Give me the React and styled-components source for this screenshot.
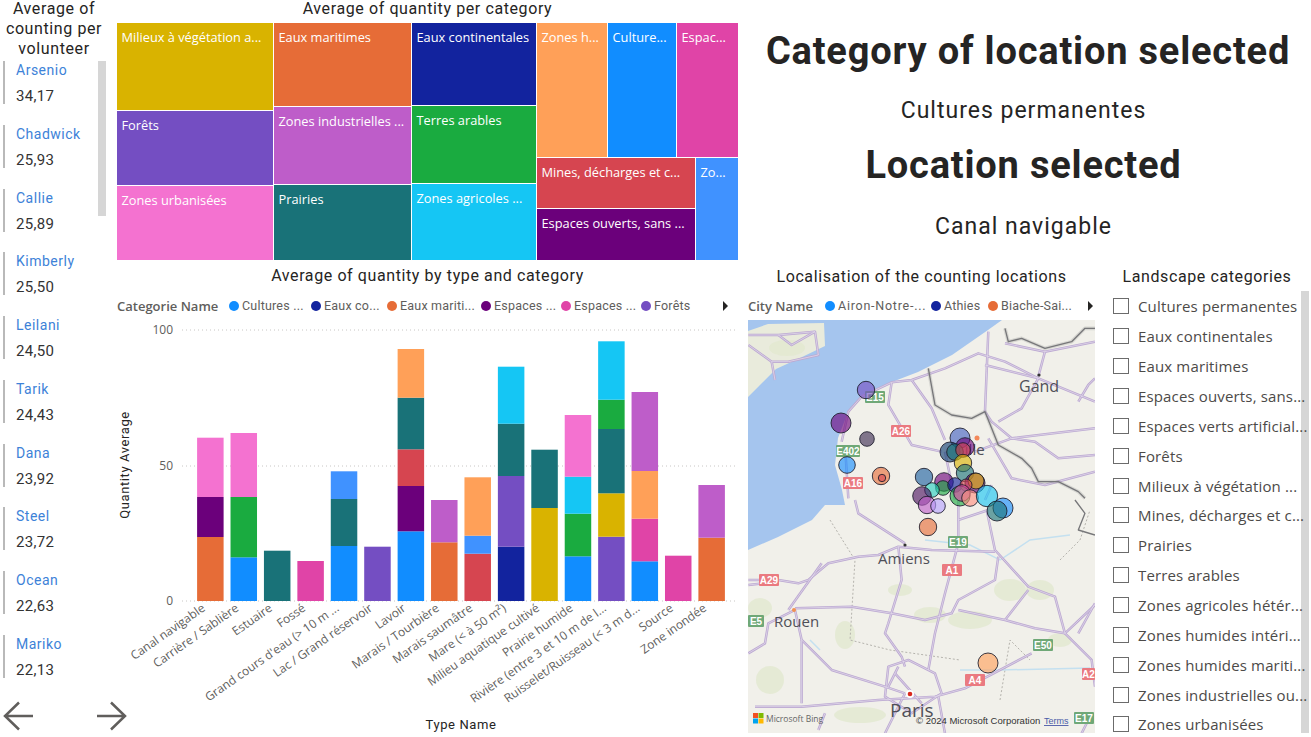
import React from "react";
import styled, { createGlobalStyle } from "styled-components";

const C = { blue: "#118DFF", navy: "#12239E", orange: "#E66C37", plum: "#6B007B", magenta: "#E044A7", violet: "#744EC2", yellow: "#D9B300", red: "#D64550", teal: "#197278", green: "#1AAB40", cyan: "#15C6F4", sky: "#4092FF", peach: "#FFA058", orchid: "#BE5DC9", pink: "#F472D0" };
const DIN = `"Roboto", "Liberation Sans", sans-serif`;
const UI = `"Open Sans", "Liberation Sans", sans-serif`;

const Global = createGlobalStyle`
  html, body { margin: 0; padding: 0; background: #fff; overflow: hidden; }
  * { box-sizing: border-box; }
`;
const Page = styled.div`display:flex;width:1311px;height:737px;overflow:hidden;background:#fff;`;
const LeftCol = styled.aside`width:107px;flex:none;display:flex;flex-direction:column;`;
const VisualTitle = styled.h2`margin:0;font:400 ${p => p.$size || 16}px/${p => p.$lh || 20}px ${DIN};letter-spacing:${p => p.$ls || .6}px;color:#252423;text-align:center;`;
const LeftTitle = styled(VisualTitle)`height:62px;margin-top:-1px;padding-left:1px;`;
const ListWrap = styled.div`display:flex;align-items:flex-start;height:631px;overflow:hidden;`;
const List = styled.ul`list-style:none;margin:0;padding:0 0 0 3px;width:98px;flex:none;display:flex;flex-direction:column;gap:20.75px;`;
const Card = styled.li`height:43px;border-left:2px solid #b9b9b9;padding:1px 0 0 11px;`;
const CardName = styled.div`font:400 14px/16px ${DIN};letter-spacing:.5px;color:#3d82d8;`;
const CardValue = styled.div`font:400 15px/18px ${DIN};letter-spacing:.3px;color:#333;margin-top:9px;`;
const Scroll = styled.div`flex:none;background:#d6d6d6;width:${p => p.$w}px;height:${p => p.$h}px;`;
const Arrows = styled.div`display:flex;justify-content:space-between;padding:0 0 0 3px;width:127px;margin-top:9px;`;

const Center = styled.main`width:633px;flex:none;display:flex;flex-direction:column;padding-left:10px;`;
const TopTitle = styled(VisualTitle)`height:23px;line-height:18px;padding-right:2px;`;
const Tree = styled.div`display:flex;gap:1px;width:621px;height:237px;`;
const TreeCol = styled.div`display:flex;flex-direction:${p => p.$dir || "column"};gap:1px;width:${p => p.$w ? p.$w + "px" : "auto"};height:${p => p.$h ? p.$h + "px" : "auto"};flex:none;`;
const Tile = styled.div`flex:none;width:${p => p.$w ? p.$w + "px" : "100%"};height:${p => p.$h ? p.$h + "px" : "100%"};background:${p => p.$bg};color:#fff;font:400 12.8px/18px ${UI};padding:5px 0 0 4.5px;white-space:nowrap;overflow:hidden;`;
const ChartTitle = styled(VisualTitle)`height:32px;line-height:32px;padding-right:2px;`;
const Legend = styled.div`display:flex;align-items:center;height:28px;width:${p => p.$w}px;position:relative;`;
const LegendName = styled.span`font:600 13px/28px ${UI};color:#605e5c;margin-right:${p => p.$gap}px;white-space:nowrap;width:${p => p.$w}px;flex:none;`;
const LegendItem = styled.span`display:flex;align-items:center;gap:3px;font:400 12.5px/28px ${DIN};letter-spacing:${p => p.$ls || .2}px;color:#605e5c;width:${p => p.$w}px;flex:none;white-space:nowrap;`;
const Dot = styled.i`display:block;width:10px;height:10px;border-radius:50%;background:${p => p.$c};flex:none;`;
const LegendNext = styled.i`position:absolute;right:${p => p.$r}px;top:9px;width:0;height:0;border-left:5px solid #252423;border-top:5px solid transparent;border-bottom:5px solid transparent;`;
const Drawing = styled.svg`display:block;flex:none;margin-left:${p => p.$ml || 0}px;`;

const Right = styled.section`flex:1;display:flex;flex-direction:column;min-width:0;`;
const Heading = styled.div`height:265px;display:flex;flex-direction:column;align-items:center;padding:27px 4px 0 0;color:#252423;`;
const BigLine = styled.h1`margin:${p => p.$mt}px 0 0 ${p => p.$ml || 0}px;font:700 38px/48px ${DIN};letter-spacing:.8px;white-space:nowrap;`;
const SubLine = styled.div`margin-top:${p => p.$mt}px;font:400 23px/28px ${DIN};letter-spacing:1px;white-space:nowrap;`;
const Lower = styled.div`display:flex;flex:1;min-height:0;`;
const MapCol = styled.div`width:360px;flex:none;padding-left:8px;`;
const MapTitle = styled(VisualTitle)`height:27px;line-height:24px;width:347px;`;
const FilterCol = styled.div`flex:1;position:relative;padding-left:13px;`;
const FilterTitle = styled(VisualTitle)`height:26px;line-height:24px;width:190px;margin-left:-1px;`;
const FilterBody = styled.div`display:flex;flex-direction:column;position:relative;padding-top:.5px;`;
const FilterRow = styled.label`display:flex;align-items:center;gap:9px;height:29.87px;font:400 15px/20px ${UI};letter-spacing:.15px;color:#4c4a48;white-space:nowrap;position:relative;z-index:1;`;
const Check = styled.span`width:16px;height:16px;border:1px solid #6b6b6b;background:#fff;flex:none;`;
const FilterScrollBox = styled.div`position:absolute;left:188px;top:0;`;

const volunteers = [["Arsenio", "34,17"], ["Chadwick", "25,93"], ["Callie", "25,89"], ["Kimberly", "25,50"], ["Leilani", "24,50"], ["Tarik", "24,43"], ["Dana", "23,92"], ["Steel", "23,72"], ["Ocean", "22,63"], ["Mariko", "22,13"]];
const filters = ["Cultures permanentes", "Eaux continentales", "Eaux maritimes", "Espaces ouverts, sans...", "Espaces verts artificial...", "Forêts", "Milieux à végétation ...", "Mines, décharges et c...", "Prairies", "Terres arables", "Zones agricoles hétér...", "Zones humides intéri...", "Zones humides mariti...", "Zones industrielles ou...", "Zones urbanisées"];

const bars = [
  ["Canal navigable", [[C.orange, 537], [C.plum, 497], [C.pink, 437.7]]],
  ["Carrière / Sablière", [[C.blue, 557.3], [C.green, 497], [C.pink, 433]]],
  ["Estuaire", [[C.teal, 550.7]]],
  ["Fossé", [[C.magenta, 561]]],
  ["Grand cours d'eau (> 10 m ...", [[C.blue, 546], [C.teal, 499], [C.sky, 471.3]]],
  ["Lac / Grand réservoir", [[C.violet, 546.7]]],
  ["Lavoir", [[C.blue, 531.3], [C.plum, 486], [C.red, 449.3], [C.teal, 397.7], [C.peach, 349]]],
  ["Marais / Tourbière", [[C.orange, 542.3], [C.orchid, 500]]],
  ["Marais saumâtre", [[C.red, 553.7], [C.sky, 535.7], [C.peach, 477.3]]],
  ["Mare (< à 50 m²)", [[C.navy, 546.7], [C.violet, 476], [C.teal, 423.7], [C.cyan, 366.7]]],
  ["Milieu aquatique cultivé", [[C.yellow, 508], [C.teal, 449.7]]],
  ["Prairie humide", [[C.blue, 556.3], [C.green, 513.7], [C.cyan, 476.7], [C.pink, 415]]],
  ["Rivière (entre 3 et 10 m de l...", [[C.violet, 536.7], [C.yellow, 493.3], [C.teal, 429], [C.green, 399.7], [C.cyan, 341.3]]],
  ["Ruisselet/Ruisseau (< 3 m d...", [[C.blue, 561.3], [C.magenta, 518.7], [C.peach, 471], [C.orchid, 392]]],
  ["Source", [[C.magenta, 555.7]]],
  ["Zone inondée", [[C.orange, 537.7], [C.orchid, 485]]],
];

function BarChart() {
  return (
    <Drawing $ml={-10} width="633" height="417" viewBox="107 320 633 417">
      {[330, 466, 601].map(y => <line key={y} x1="182" x2="736" y1={y} y2={y} stroke="#c8c6c4" strokeWidth="1" strokeDasharray="1 3" />)}
      {[["100", 330], ["50", 466], ["0", 601]].map(([t, y]) => <text key={t} x="173" y={y + 4} textAnchor="end" fontFamily="Open Sans" fontSize="12" fill="#605e5c">{t}</text>)}
      <text transform="translate(129 465) rotate(-90)" textAnchor="middle" fontFamily="Roboto" fontSize="13" letterSpacing=".6" fill="#252423">Quantity Average</text>
      <text x="461" y="729" textAnchor="middle" fontFamily="Roboto" fontSize="13" letterSpacing=".6" fill="#252423">Type Name</text>
      {bars.map(([label, segs], i) => {
        const x = 197.1 + 33.42 * i;
        return (
          <g key={label}>
            {segs.map(([c, top], j) => {
              const bottom = j === 0 ? 601 : segs[j - 1][1];
              return <rect key={j} x={x} y={top} width="26.5" height={bottom - top} fill={c} />;
            })}
            <text transform={`translate(${x + 9} 610) rotate(-35)`} textAnchor="end" fontFamily="Open Sans" fontSize="12" fill="#605e5c">{label}</text>
          </g>
        );
      })}
    </Drawing>
  );
}

const roadsA = [
  "M290 530L310 440L350 395L440 352L500 345L600 310L700 265L780 290L880 340L1050 410",
  "M440 352L430 420L500 540L590 560", "M500 345L560 430L600 525", "M730 200L725 320L720 440L740 470L800 520L1050 490",
  "M880 340L830 430L760 470", "M720 300L880 340", "M780 235L900 260L1050 230", "M900 260L880 335", "M10 210L100 210L210 200L220 270L130 290L80 290L10 240", "M80 290L90 345", "M100 210L140 240L210 200",
  "M690 560L800 520L870 530L940 580L1050 570", "M730 520L800 640L900 660L1050 620", "M300 540L310 700", "M600 560L630 705", "M740 660L720 705", "M1000 410L1030 360L1050 340",
];
const roadsB = [
  "M10 240L100 240L160 250L190 240L250 190L340 170L400 165L460 140L560 150L750 155", "M480 130L340 40L330 0", "M460 140L470 240L430 370L420 400L470 470L480 500",
  "M640 60L640 130L600 280L570 400L550 510", "M725 30L750 150L850 260L930 290L960 400L1040 480L1050 560", "M760 170L750 240L640 300L620 340L540 360L440 340L320 320L150 325",
  "M1050 315L960 400L870 385L780 360L640 330", "M150 330L170 420L260 510L420 560L480 580", "M10 460L60 430L70 370L150 330", "M30 620L170 620L400 600L570 590L660 565L860 460",
  "M430 500L490 480L570 520L590 580L500 640L420 590Z", "M170 420L170 610", "M450 520L530 610", "M230 190L130 330", "M850 270L780 360", "M1030 660L1010 700", "M220 690L240 640", "M480 580L420 700",
  "M640 0L640 60L730 30", "M10 255L100 245", "M580 590L600 700", "M1000 400L1050 310", "M460 500L430 560",
];
const bubbles = [
  [866, 390, 8.7, C.violet], [841, 423, 10, C.plum], [867, 439, 7.3, "#3a2a50"], [847, 465, 8.3, C.blue], [881, 476, 8.7, C.orange], [882, 478, 3.7, C.red],
  [960, 438, 10, "#4060c0"], [965, 447, 9.3, C.plum], [950, 452, 10, "#0b3a70"], [955, 452, 8.3, C.teal], [963, 450, 7.3, C.red], [963, 463, 8.7, C.yellow], [965, 473, 8.7, C.teal],
  [924, 477, 8.7, "#1a5fa0"], [944, 482, 9.3, C.plum], [943, 488, 7.3, C.green], [932, 490, 7.3, "#26d0c0"], [922, 496, 9.3, "#4a1060"], [927, 505, 8.7, C.orchid], [938, 506, 7.3, "#b5a1ff"],
  [955, 485, 7.3, C.navy], [975, 483, 10, C.plum], [976, 481, 8, C.yellow], [966, 485, 6, C.red], [960, 496, 10, C.green], [962, 493, 8.3, C.magenta], [970, 498, 8.3, "#ff9080"], [987, 496, 10.7, C.cyan],
  [1003, 508, 10, C.blue], [997, 511, 10, C.teal], [928, 527, 8.7, C.orange], [988, 663, 10, C.peach],
];
const GREEN = "#6fa877";
const RED = "#ea7a80";
const Badge = ({ x, y, t, c, w = 20 }) => (
  <g>
    <rect x={x} y={y} width={w} height="12" rx="1" fill={c} />
    <text x={x + w / 2} y={y + 9.5} textAnchor="middle" fontFamily="Liberation Sans" fontWeight="700" fontSize="10" fill="#fff">{t}</text>
  </g>
);
const Place = ({ x, y, t, s = 16 }) => <text x={x} y={y} fontFamily="Open Sans" fontSize={s} fill="#4f4f57">{t}</text>;

function MapView() {
  return (
    <Drawing width="347" height="413" viewBox="748 320 347 413">
      <rect x="748" y="320" width="347" height="413" fill="#f1f0ea" />
      <path d="M748 320H1002L988 330L952 355L918 372L892 382L862 395L848 412L838 438L835 465L842 490L845 505L832 505L825 505L812 520L778 537L748 550Z" fill="#a5c5ee" />
      <path d="M748 331L768 324L824 323L825 346L800 358L776 369L760 385L748 397Z" fill="#e9ebdc" />
      <g fill="#e1e8cd" opacity=".7">
        <ellipse cx="787" cy="348" rx="18" ry="8" /><ellipse cx="1010" cy="590" rx="16" ry="11" /><ellipse cx="970" cy="620" rx="22" ry="9" /><ellipse cx="930" cy="615" rx="16" ry="8" /><ellipse cx="770" cy="680" rx="14" ry="14" /><ellipse cx="860" cy="715" rx="26" ry="8" /><ellipse cx="1040" cy="590" rx="14" ry="10" /><ellipse cx="760" cy="608" rx="12" ry="10" /><ellipse cx="900" cy="590" rx="12" ry="6" /><ellipse cx="845" cy="635" rx="10" ry="14" /><ellipse cx="1060" cy="640" rx="12" ry="7" />
      </g>
      <g fill="none" stroke="#b5b3ad" strokeWidth="1" strokeDasharray="2 2">
        <path d="M830 520L855 560L850 640L890 650L960 660" /><path d="M1060 560L1080 540L1090 510" /><path d="M1000 700L1010 640L1030 660" />
      </g>
      <g fill="none" stroke="#c4e0f0" strokeWidth="1.5">
        <path d="M925 540L970 545L1000 560L1030 540L1070 535" /><path d="M960 670L1000 670L1090 668" /><path d="M810 640L820 650" />
      </g>
      <g fill="none" strokeLinejoin="round">
        <g transform="translate(745 265) scale(.3333)" stroke="#bca9d2" strokeWidth="7.500">{roadsA.map(d => <path key={d} d={d} />)}</g>
        <g transform="translate(745 500) scale(.3333)" stroke="#bca9d2" strokeWidth="7.500">{roadsB.map(d => <path key={d} d={d} />)}</g>
        <g transform="translate(745 265) scale(.3333)" stroke="#e9e2ef" strokeWidth="2">{roadsA.map(d => <path key={d} d={d} />)}</g>
        <g transform="translate(745 500) scale(.3333)" stroke="#e9e2ef" strokeWidth="2">{roadsB.map(d => <path key={d} d={d} />)}</g>
        <g transform="translate(745 265) scale(.3333)" stroke="#8a8a8a" strokeOpacity=".25" strokeWidth="11">
          <path d="M780 190L790 230L830 220L900 250L980 230L1020 190L1050 190" />
          <path d="M550 310L570 420L620 450L680 460L720 440L740 490L760 540L830 580L860 610L880 650L940 650L1000 680L1020 700" />
        </g>
        <g transform="translate(745 265) scale(.3333)" stroke="#77777a" strokeWidth="4">
          <path d="M780 190L790 230L830 220L900 250L980 230L1020 190L1050 190" />
          <path d="M550 310L570 420L620 450L680 460L720 440L740 490L760 540L830 580L860 610L880 650L940 650L1000 680L1020 700" />
        </g>
        <path transform="translate(745 500) scale(.3333)" stroke="#77777a" strokeWidth="4" d="M1050 105L1000 90L1020 40L990 0" />
      </g>
      <circle cx="1039" cy="375" r="1.6" fill="#333" /><circle cx="977" cy="438" r="2.500" fill="#f3885a" /><circle cx="905" cy="545" r="1.6" fill="#333" /><circle cx="794" cy="610" r="2" fill="#f39050" /><circle cx="910" cy="694" r="4" fill="#fff" /><circle cx="910" cy="694" r="2.300" fill="#d8281c" />
      <Place x={1019} y={392} t="Gand" /><Place x={957} y={455} s={15} t="Lille" /><Place x={878} y={564} s={15} t="Amiens" /><Place x={774} y={627} s={15} t="Rouen" /><Place x={890} y={717} s={19} t="Paris" />
      <Badge x={865} y={391} t="E15" c={GREEN} /><Badge x={891} y={425} t="A26" c={RED} /><Badge x={836} y={445} w={24} t="E402" c={GREEN} /><Badge x={843} y={477} t="A16" c={RED} />
      <Badge x={948} y={536} t="E19" c={GREEN} /><Badge x={942} y={564} t="A1" c={RED} /><Badge x={759} y={574} t="A29" c={RED} /><Badge x={748} y={615} w={16} t="E5" c={GREEN} />
      <Badge x={1033} y={639} t="E50" c={GREEN} /><Badge x={965} y={674} t="A4" c={RED} /><Badge x={1082} y={668} w={13} t="A2" c={RED} /><Badge x={1074} y={712} t="E17" c={GREEN} />
      {bubbles.map(([x, y, r, c], i) => <circle key={i} cx={x} cy={y} r={r} fill={c} fillOpacity=".62" stroke="#1b1b2a" strokeOpacity=".85" strokeWidth="1" />)}
      <g>
        <rect x="753" y="713" width="5" height="5" fill="#f25022" /><rect x="758.500" y="713" width="5" height="5" fill="#7fba00" /><rect x="753" y="718.500" width="5" height="5" fill="#00a4ef" /><rect x="758.500" y="718.500" width="5" height="5" fill="#ffb900" />
      </g>
      <text x="766" y="721.500" fontFamily="Open Sans" fontSize="8.500" fill="#666">Microsoft Bing</text>
      <text x="916" y="724" fontFamily="Liberation Sans" fontSize="9.500" fill="#333">© 2024 Microsoft Corporation</text>
      <text x="1044" y="724" fontFamily="Liberation Sans" fontSize="9" fill="#4a5aa8" textDecoration="underline">Terms</text>
    </Drawing>
  );
}

const Arrow = ({ flip }) => (
  <svg width="30" height="30" viewBox="0 0 30 30" style={flip ? { transform: "scaleX(-1)" } : undefined}>
    <path d="M30 15H2M16 1.500L2 15L16 28.500" fill="none" stroke="#605e5c" strokeWidth="2.500" />
  </svg>
);

export default function App() {
  return (
    <Page>
      <Global />
      <LeftCol>
        <LeftTitle>Average of counting per volunteer</LeftTitle>
        <ListWrap>
          <List>{volunteers.map(([n, v]) => <Card key={n}><CardName>{n}</CardName><CardValue>{v}</CardValue></Card>)}</List>
          <Scroll $w={8} $h={155} />
        </ListWrap>
        <Arrows><Arrow /><Arrow flip /></Arrows>
      </LeftCol>
      <Center>
        <TopTitle>Average of quantity per category</TopTitle>
        <Tree>
          <TreeCol $w={156}>
            <Tile $h={87} $bg={C.yellow}>Milieux à végétation a...</Tile>
            <Tile $h={74} $bg={C.violet}>Forêts</Tile>
            <Tile $h={74} $bg={C.pink}>Zones urbanisées</Tile>
          </TreeCol>
          <TreeCol $w={137}>
            <Tile $h={83} $bg={C.orange}>Eaux maritimes</Tile>
            <Tile $h={77} $bg={C.orchid}>Zones industrielles ...</Tile>
            <Tile $h={75} $bg={C.teal}>Prairies</Tile>
          </TreeCol>
          <TreeCol $w={124}>
            <Tile $h={82} $bg={C.navy}>Eaux continentales</Tile>
            <Tile $h={77} $bg={C.green}>Terres arables</Tile>
            <Tile $h={76} $bg={C.cyan}>Zones agricoles ...</Tile>
          </TreeCol>
          <TreeCol $w={201}>
            <TreeCol $dir="row" $h={134}>
              <Tile $w={70} $bg={C.peach}>Zones h...</Tile>
              <Tile $w={68} $bg={C.blue}>Culture...</Tile>
              <Tile $w={61} $bg={C.magenta}>Espac...</Tile>
            </TreeCol>
            <TreeCol $dir="row" $h={102}>
              <TreeCol $w={158}>
                <Tile $h={50} $bg={C.red}>Mines, décharges et c...</Tile>
                <Tile $h={51} $bg={C.plum}>Espaces ouverts, sans ...</Tile>
              </TreeCol>
              <Tile $w={42} $bg={C.sky}>Zo...</Tile>
            </TreeCol>
          </TreeCol>
        </Tree>
        <ChartTitle>Average of quantity by type and category</ChartTitle>
        <Legend $w={623}>
          <LegendName $w={104} $gap={8}>Categorie Name</LegendName>
          <LegendItem $w={82}><Dot $c={C.blue} />Cultures ...</LegendItem>
          <LegendItem $w={76}><Dot $c={C.navy} />Eaux co...</LegendItem>
          <LegendItem $w={94}><Dot $c={C.orange} />Eaux mariti...</LegendItem>
          <LegendItem $w={80}><Dot $c={C.plum} />Espaces ...</LegendItem>
          <LegendItem $w={80}><Dot $c={C.magenta} />Espaces ...</LegendItem>
          <LegendItem $w={60}><Dot $c={C.violet} />Forêts</LegendItem>
          <LegendNext $r={12} />
        </Legend>
        <BarChart />
      </Center>
      <Right>
        <Heading>
          <BigLine $mt={0} $ml={9}>Category of location selected</BigLine>
          <SubLine $mt={22}>Cultures permanentes</SubLine>
          <BigLine $mt={16}>Location selected</BigLine>
          <SubLine $mt={24}>Canal navigable</SubLine>
        </Heading>
        <Lower>
          <MapCol>
            <MapTitle>Localisation of the counting locations</MapTitle>
            <Legend $w={347}>
              <LegendName $w={77} $gap={0}>City Name</LegendName>
              <LegendItem $w={106} $ls={.75}><Dot $c={C.blue} />Airon-Notre-...</LegendItem>
              <LegendItem $w={57}><Dot $c={C.navy} />Athies</LegendItem>
              <LegendItem $w={85}><Dot $c={C.orange} />Biache-Sai...</LegendItem>
              <LegendNext $r={2} />
            </Legend>
            <MapView />
          </MapCol>
          <FilterCol>
            <FilterTitle>Landscape categories</FilterTitle>
            <FilterBody>
              <FilterScrollBox><Scroll $w={8} $h={442} /></FilterScrollBox>
              {filters.map(f => <FilterRow key={f}><Check />{f}</FilterRow>)}
            </FilterBody>
          </FilterCol>
        </Lower>
      </Right>
    </Page>
  );
}
